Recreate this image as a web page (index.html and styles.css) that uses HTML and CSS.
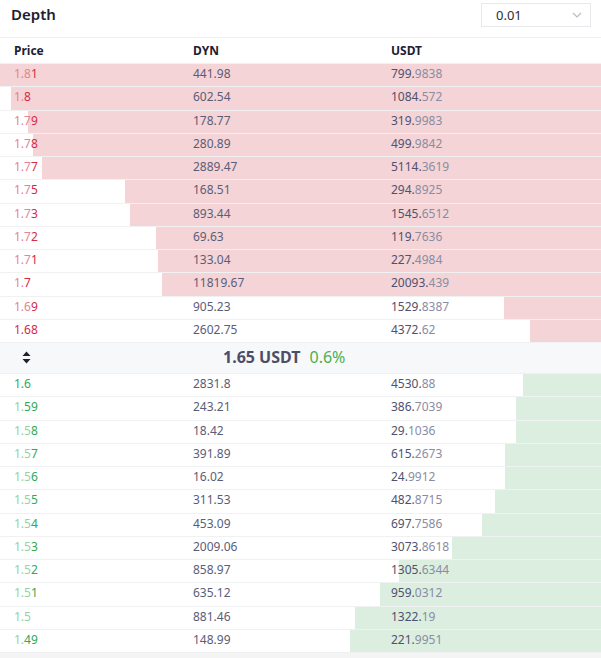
FILE: index.html
```html
<!DOCTYPE html>
<html lang="en">
<head>
    <meta charset="UTF-8">
    <title>Depth</title>
    <link rel="stylesheet" href="styles.css">
</head>
<body>
    <div class="depth">
        <div class="depth-header">
            <h2>Depth</h2>
            <div class="select">
                <span>0.01</span>
                <svg width="10" height="6" viewBox="0 0 10 6"><path d="M1 1l4 4 4-4" fill="none" stroke="#b8bac4" stroke-width="1.2"/></svg>
            </div>
        </div>
        <div class="row head">
            <span>Price</span><span>DYN</span><span>USDT</span>
        </div>

        <div class="asks">
            <div class="row"><i class="bar" style="width:601px"></i><span class="price"><b>1.8</b>1</span><span class="qty">441.98</span><span class="total">799.<em>9838</em></span></div>
            <div class="row"><i class="bar" style="width:590px"></i><span class="price"><b>1.</b>8</span><span class="qty">602.54</span><span class="total">1084.<em>572</em></span></div>
            <div class="row"><i class="bar" style="width:573px"></i><span class="price"><b>1.7</b>9</span><span class="qty">178.77</span><span class="total">319.<em>9983</em></span></div>
            <div class="row"><i class="bar" style="width:568px"></i><span class="price"><b>1.7</b>8</span><span class="qty">280.89</span><span class="total">499.<em>9842</em></span></div>
            <div class="row"><i class="bar" style="width:559px"></i><span class="price"><b>1.7</b>7</span><span class="qty">2889.47</span><span class="total">5114.<em>3619</em></span></div>
            <div class="row"><i class="bar" style="width:476px"></i><span class="price"><b>1.7</b>5</span><span class="qty">168.51</span><span class="total">294.<em>8925</em></span></div>
            <div class="row"><i class="bar" style="width:471px"></i><span class="price"><b>1.7</b>3</span><span class="qty">893.44</span><span class="total">1545.<em>6512</em></span></div>
            <div class="row"><i class="bar" style="width:445px"></i><span class="price"><b>1.7</b>2</span><span class="qty">69.63</span><span class="total">119.<em>7636</em></span></div>
            <div class="row"><i class="bar" style="width:443px"></i><span class="price"><b>1.7</b>1</span><span class="qty">133.04</span><span class="total">227.<em>4984</em></span></div>
            <div class="row"><i class="bar" style="width:439px"></i><span class="price"><b>1.</b>7</span><span class="qty">11819.67</span><span class="total">20093.<em>439</em></span></div>
            <div class="row"><i class="bar" style="width:97px"></i><span class="price"><b>1.6</b>9</span><span class="qty">905.23</span><span class="total">1529.<em>8387</em></span></div>
            <div class="row"><i class="bar" style="width:71px"></i><span class="price">1.68</span><span class="qty">2602.75</span><span class="total">4372.<em>62</em></span></div>
        </div>

        <div class="mid">
            <svg class="sort" width="9" height="13" viewBox="0 0 9 13"><path d="M4.5 0.5L8.5 5H0.5z M4.5 12.5L8.5 8H0.5z" fill="#1f2131"/></svg>
            <span class="last">1.65 USDT</span>
            <span class="change">0.6%</span>
        </div>

        <div class="bids">
            <div class="row"><i class="bar" style="width:78px"></i><span class="price">1.6</span><span class="qty">2831.8</span><span class="total">4530.<em>88</em></span></div>
            <div class="row"><i class="bar" style="width:85px"></i><span class="price"><b>1.</b>59</span><span class="qty">243.21</span><span class="total">386.<em>7039</em></span></div>
            <div class="row"><i class="bar" style="width:85px"></i><span class="price"><b>1.5</b>8</span><span class="qty">18.42</span><span class="total">29.<em>1036</em></span></div>
            <div class="row"><i class="bar" style="width:96px"></i><span class="price"><b>1.5</b>7</span><span class="qty">391.89</span><span class="total">615.<em>2673</em></span></div>
            <div class="row"><i class="bar" style="width:96px"></i><span class="price"><b>1.5</b>6</span><span class="qty">16.02</span><span class="total">24.<em>9912</em></span></div>
            <div class="row"><i class="bar" style="width:106px"></i><span class="price"><b>1.5</b>5</span><span class="qty">311.53</span><span class="total">482.<em>8715</em></span></div>
            <div class="row"><i class="bar" style="width:119px"></i><span class="price"><b>1.5</b>4</span><span class="qty">453.09</span><span class="total">697.<em>7586</em></span></div>
            <div class="row"><i class="bar" style="width:149px"></i><span class="price"><b>1.5</b>3</span><span class="qty">2009.06</span><span class="total">3073.<em>8618</em></span></div>
            <div class="row"><i class="bar" style="width:202px"></i><span class="price"><b>1.5</b>2</span><span class="qty">858.97</span><span class="total">1305.<em>6344</em></span></div>
            <div class="row"><i class="bar" style="width:221px"></i><span class="price"><b>1.5</b>1</span><span class="qty">635.12</span><span class="total">959.<em>0312</em></span></div>
            <div class="row"><i class="bar" style="width:246px"></i><span class="price"><b>1.5</b></span><span class="qty">881.46</span><span class="total">1322.<em>19</em></span></div>
            <div class="row"><i class="bar" style="width:251px"></i><span class="price"><b>1.</b>49</span><span class="qty">148.99</span><span class="total">221.<em>9951</em></span></div>
        </div>
    </div>
</body>
</html>
```

FILE: styles.css
```css
body {
    margin: 0;
    background: #f4f4f5;
    font-family: "Noto Sans", Arial, sans-serif;
    font-size: 12px;
}
.depth {
    background: #fff;
    width: 601px;
}
.depth-header {
    height: 37px;
    display: flex;
    align-items: center;
    justify-content: space-between;
    padding: 0 10px 0 11px;
    border-bottom: 1px solid #eff0f2;
}
.depth-header h2 {
    margin: 0 0 10px;
    font-size: 15px;
    font-weight: 600;
    color: #1d2031;
}
.select {
    box-sizing: border-box;
    width: 110px;
    height: 24px;
    margin-bottom: 7px;
    border: 1px solid #e8e9ec;
    display: flex;
    align-items: center;
    justify-content: space-between;
    padding: 0 8px 0 14px;
    font-size: 13px;
    color: #2a2c3a;
}
.row {
    position: relative;
    box-sizing: border-box;
    height: 23.25px;
    display: grid;
    grid-template-columns: 179px 198px 1fr;
    align-items: center;
    padding-left: 14px;
    padding-bottom: 3px;
    border-bottom: 1px solid #f0f1f3;
    color: #5b5d78;
}
.row span {
    position: relative;
}
.row.head {
    height: 26px;
    padding-bottom: 1px;
    font-weight: 700;
    color: #1d2031;
}
.bar {
    position: absolute;
    top: 0;
    right: 0;
    bottom: 0;
}
.asks .bar {
    background: #f4d4d6;
}
.bids .bar {
    background: #dbeedf;
}
.asks .price {
    color: #d42b46;
}
.asks .price b {
    font-weight: 400;
    color: #e8838f;
}
.bids .price {
    color: #2eaa57;
}
.bids .price b {
    font-weight: 400;
    color: #94d3a4;
}
.total {
    color: #4f5170;
}
.total em {
    font-style: normal;
    color: #8a8ca2;
}
.mid {
    box-sizing: border-box;
    height: 31px;
    display: flex;
    align-items: center;
    padding-left: 22px;
    padding-bottom: 2px;
    background: #f7f8fa;
    border-bottom: 1px solid #eff0f2;
}
.mid .sort {
    margin-right: 192px;
}
.last {
    font-size: 16px;
    font-weight: 700;
    color: #4b4e66;
}
.change {
    margin-left: 9px;
    font-size: 16px;
    color: #4caf50;
}
```
